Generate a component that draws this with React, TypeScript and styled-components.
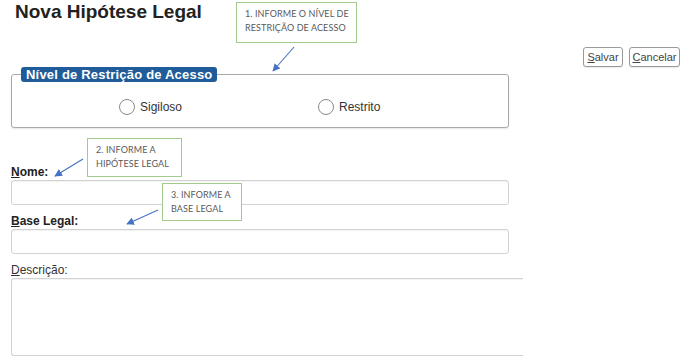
import React from 'react';
import styled, { createGlobalStyle } from 'styled-components';

const GlobalStyle = createGlobalStyle`
  html, body {
    margin: 0;
    padding: 0;
    background: #fff;
  }
  body {
    font-family: "Liberation Sans", Arial, sans-serif;
    color: #333;
  }
  * {
    box-sizing: border-box;
  }
`;

const S = {
  Page: styled.div`
    position: relative;
    width: 686px;
    height: 359px;
    overflow: hidden;
    padding: 0 6px 0 11px;
  `,
  Header: styled.div`
    display: flex;
    justify-content: space-between;
    height: 67px;
  `,
  Title: styled.h1`
    margin: 1px 0 0 4px;
    font-size: 19px;
    font-weight: bold;
    color: #222;
    line-height: 22px;
  `,
  Actions: styled.div`
    display: flex;
    gap: 6px;
    align-self: flex-end;
  `,
  Button: styled.button<{ $width: number }>`
    width: ${(p) => p.$width}px;
    height: 20px;
    padding: 0;
    border: 1px solid #9a9a9a;
    border-radius: 3px;
    background: #fff;
    font-family: "Liberation Sans", Arial, sans-serif;
    font-size: 11px;
    color: #444;
    box-shadow: 0 1px 1px rgba(0, 0, 0, 0.08);
  `,
  Fieldset: styled.fieldset`
    width: 498px;
    margin: 0;
    padding: 0 0 12px 0;
    border: 1px solid #a9a9a9;
    border-radius: 3px;
    box-shadow: 0 1px 2px rgba(0, 0, 0, 0.1);
  `,
  Legend: styled.legend`
    margin-left: 9px;
    padding: 0 5px;
    height: 15px;
    line-height: 15px;
    background: #1f5c99;
    color: #fff;
    font-size: 13px;
    font-weight: bold;
    letter-spacing: 0.2px;
    border-radius: 3px;
  `,
  RadioRow: styled.div`
    display: flex;
    align-items: center;
    gap: 136px;
    margin-top: 17px;
    padding-left: 107px;
  `,
  RadioItem: styled.label`
    display: flex;
    align-items: center;
    gap: 5px;
    font-size: 12px;
    color: #333;
  `,
  Radio: styled.input`
    appearance: none;
    width: 16px;
    height: 16px;
    margin: 0;
    border: 1px solid #8a8a8a;
    border-radius: 50%;
    background: #fff;
  `,
  Field: styled.div<{ $top: number }>`
    margin-top: ${(p) => p.$top}px;
  `,
  Label: styled.label<{ $bold?: boolean }>`
    display: block;
    height: 14px;
    line-height: 14px;
    margin-bottom: 1px;
    font-size: 12px;
    font-weight: ${(p) => (p.$bold ? 'bold' : 'normal')};
    color: ${(p) => (p.$bold ? '#222' : '#333')};
  `,
  Input: styled.input`
    display: block;
    width: 498px;
    height: 25px;
    margin: 0;
    border: 1px solid #d2d2d2;
    border-radius: 3px;
    box-shadow: inset 0 1px 1px rgba(0, 0, 0, 0.05);
  `,
  TextArea: styled.textarea`
    display: block;
    width: 512px;
    height: 78px;
    margin: 0;
    resize: none;
    border: 1px solid #d2d2d2;
    border-right: none;
    border-radius: 3px 0 0 3px;
    box-shadow: inset 0 1px 1px rgba(0, 0, 0, 0.05);
  `,
  Callout: styled.div<{ $left: number; $top: number; $width: number; $height: number }>`
    position: absolute;
    left: ${(p) => p.$left}px;
    top: ${(p) => p.$top}px;
    width: ${(p) => p.$width}px;
    height: ${(p) => p.$height}px;
    padding: 4px 8px;
    border: 1.5px solid #a4c98c;
    background: #fff;
    font-family: Lato, "Open Sans", sans-serif;
    font-size: 9px;
    line-height: 14px;
    letter-spacing: 0.1px;
    color: #5a5a5a;
    text-transform: uppercase;
    white-space: nowrap;
  `,
  Arrows: styled.svg`
    position: absolute;
    left: 0;
    top: 0;
    pointer-events: none;
  `,
};

const arrows = [
  { x1: 294, y1: 47, x2: 273, y2: 71 },
  { x1: 83, y1: 159, x2: 55, y2: 176 },
  { x1: 158, y1: 210, x2: 127, y2: 224 },
];

const App = () => {
  return (
    <S.Page>
      <GlobalStyle />
      <S.Header>
        <S.Title>Nova Hipótese Legal</S.Title>
        <S.Actions>
          <S.Button $width={40}>
            <u>S</u>alvar
          </S.Button>
          <S.Button $width={51}>
            <u>C</u>ancelar
          </S.Button>
        </S.Actions>
      </S.Header>

      <S.Fieldset>
        <S.Legend>Nível de Restrição de Acesso</S.Legend>
        <S.RadioRow>
          <S.RadioItem>
            <S.Radio type="radio" name="nivel" />
            Sigiloso
          </S.RadioItem>
          <S.RadioItem>
            <S.Radio type="radio" name="nivel" />
            Restrito
          </S.RadioItem>
        </S.RadioRow>
      </S.Fieldset>

      <S.Field $top={37}>
        <S.Label $bold>
          <u>N</u>ome:
        </S.Label>
        <S.Input type="text" />
      </S.Field>

      <S.Field $top={9}>
        <S.Label $bold>
          <u>B</u>ase Legal:
        </S.Label>
        <S.Input type="text" />
      </S.Field>

      <S.Field $top={9}>
        <S.Label>
          <u>D</u>escrição:
        </S.Label>
        <S.TextArea />
      </S.Field>

      <S.Callout $left={236} $top={2} $width={121} $height={41}>
        1. Informe o nível de
        <br />
        restrição de acesso
      </S.Callout>
      <S.Callout $left={87} $top={138} $width={95} $height={39}>
        2. Informe a
        <br />
        hipótese legal
      </S.Callout>
      <S.Callout $left={162} $top={183} $width={80} $height={38}>
        3. Informe a
        <br />
        base legal
      </S.Callout>

      <S.Arrows width={686} height={359}>
        <defs>
          <marker id="head" viewBox="0 0 10 10" refX="9" refY="5" markerWidth="7" markerHeight="7" orient="auto">
            <path d="M0 0 L10 5 L0 10 z" fill="#4472c4" />
          </marker>
        </defs>
        {arrows.map((a, i) => (
          <line key={i} x1={a.x1} y1={a.y1} x2={a.x2} y2={a.y2} stroke="#4472c4" strokeWidth={1.1} markerEnd="url(#head)" />
        ))}
      </S.Arrows>
    </S.Page>
  );
};

export default App;
